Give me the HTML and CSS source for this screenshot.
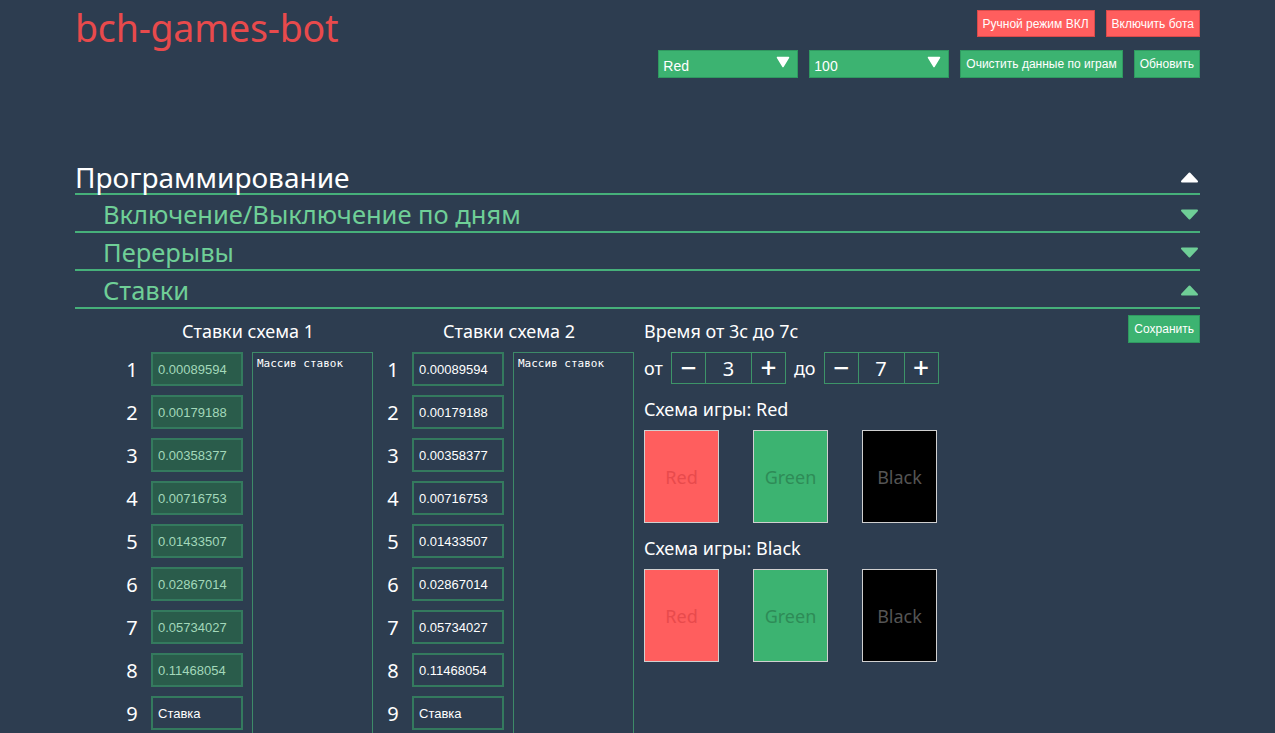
FILE: index.html
```html
<!DOCTYPE html>
<html lang="ru">
<head>
<meta charset="utf-8">
<title>bch-games-bot</title>
<link rel="stylesheet" href="styles.css">
</head>
<body>
<div class="container">
  <header class="header">
    <h1 class="logo">bch-games-bot</h1>
    <div class="controls">
      <div class="controls-row">
        <button class="btn btn-red">Ручной режим ВКЛ</button>
        <button class="btn btn-red">Включить бота</button>
      </div>
      <div class="controls-row">
        <div class="select-wrap">
          <select class="select"><option>Red</option></select>
          <svg class="select-arrow" width="14" height="12" viewBox="0 0 14 12"><path d="M1.5 1.5 H12.5 L7 10.5 Z" fill="#fff" stroke="#fff" stroke-width="1.5" stroke-linejoin="round"/></svg>
        </div>
        <div class="select-wrap">
          <select class="select"><option>100</option></select>
          <svg class="select-arrow" width="14" height="12" viewBox="0 0 14 12"><path d="M1.5 1.5 H12.5 L7 10.5 Z" fill="#fff" stroke="#fff" stroke-width="1.5" stroke-linejoin="round"/></svg>
        </div>
        <button class="btn btn-green">Очистить данные по играм</button>
        <button class="btn btn-green">Обновить</button>
      </div>
    </div>
  </header>

  <section class="section">
    <div class="sec-head main">
      <span>Программирование</span>
      <svg width="19" height="11" viewBox="0 0 19 11"><path d="M2 9.5 L9.5 1.5 L17 9.5 Z" fill="#fff" stroke="#fff" stroke-width="2" stroke-linejoin="round"/></svg>
    </div>
    <div class="sec-head sub">
      <span>Включение/Выключение по дням</span>
      <svg width="19" height="11" viewBox="0 0 19 11"><path d="M2 1.5 L17 1.5 L9.5 9.5 Z" fill="#6fcf97" stroke="#6fcf97" stroke-width="2" stroke-linejoin="round"/></svg>
    </div>
    <div class="sec-head sub">
      <span>Перерывы</span>
      <svg width="19" height="11" viewBox="0 0 19 11"><path d="M2 1.5 L17 1.5 L9.5 9.5 Z" fill="#6fcf97" stroke="#6fcf97" stroke-width="2" stroke-linejoin="round"/></svg>
    </div>
    <div class="sec-head sub">
      <span>Ставки</span>
      <svg width="19" height="11" viewBox="0 0 19 11"><path d="M2 9.5 L9.5 1.5 L17 9.5 Z" fill="#6fcf97" stroke="#6fcf97" stroke-width="2" stroke-linejoin="round"/></svg>
    </div>

    <div class="bets">
      <div class="scheme">
        <div class="scheme-title">Ставки схема 1</div>
        <div class="scheme-body">
          <div class="rows">
            <div class="row"><span class="num">1</span><input class="inp filled" value="0.00089594"></div>
            <div class="row"><span class="num">2</span><input class="inp filled" value="0.00179188"></div>
            <div class="row"><span class="num">3</span><input class="inp filled" value="0.00358377"></div>
            <div class="row"><span class="num">4</span><input class="inp filled" value="0.00716753"></div>
            <div class="row"><span class="num">5</span><input class="inp filled" value="0.01433507"></div>
            <div class="row"><span class="num">6</span><input class="inp filled" value="0.02867014"></div>
            <div class="row"><span class="num">7</span><input class="inp filled" value="0.05734027"></div>
            <div class="row"><span class="num">8</span><input class="inp filled" value="0.11468054"></div>
            <div class="row"><span class="num">9</span><input class="inp" placeholder="Ставка"></div>
          </div>
          <textarea class="area" placeholder="Массив ставок"></textarea>
        </div>
      </div>

      <div class="scheme">
        <div class="scheme-title">Ставки схема 2</div>
        <div class="scheme-body">
          <div class="rows">
            <div class="row"><span class="num">1</span><input class="inp" value="0.00089594"></div>
            <div class="row"><span class="num">2</span><input class="inp" value="0.00179188"></div>
            <div class="row"><span class="num">3</span><input class="inp" value="0.00358377"></div>
            <div class="row"><span class="num">4</span><input class="inp" value="0.00716753"></div>
            <div class="row"><span class="num">5</span><input class="inp" value="0.01433507"></div>
            <div class="row"><span class="num">6</span><input class="inp" value="0.02867014"></div>
            <div class="row"><span class="num">7</span><input class="inp" value="0.05734027"></div>
            <div class="row"><span class="num">8</span><input class="inp" value="0.11468054"></div>
            <div class="row"><span class="num">9</span><input class="inp" placeholder="Ставка"></div>
          </div>
          <textarea class="area" placeholder="Массив ставок"></textarea>
        </div>
      </div>

      <div class="settings">
        <div class="settings-head">
          <span class="label">Время от 3с до 7с</span>
          <button class="btn btn-green save">Сохранить</button>
        </div>
        <div class="time-row">
          <span class="label">от</span>
          <div class="stepper">
            <span class="step-btn">−</span><span class="step-val">3</span><span class="step-btn">+</span>
          </div>
          <span class="label">до</span>
          <div class="stepper">
            <span class="step-btn">−</span><span class="step-val">7</span><span class="step-btn">+</span>
          </div>
        </div>
        <div class="label game-label">Схема игры: Red</div>
        <div class="cards">
          <div class="card red">Red</div>
          <div class="card green">Green</div>
          <div class="card black">Black</div>
        </div>
        <div class="label game-label">Схема игры: Black</div>
        <div class="cards">
          <div class="card red">Red</div>
          <div class="card green">Green</div>
          <div class="card black">Black</div>
        </div>
      </div>
    </div>
  </section>
</div>
</body>
</html>
```

FILE: styles.css
```css
* { box-sizing: border-box; }
html, body {
  margin: 0;
  background: #2d3d50;
  color: #fff;
  font-family: "Noto Sans", "Open Sans", sans-serif;
  overflow: hidden;
}
.container {
  width: 1125px;
  margin: 0 auto;
}
.header {
  display: flex;
  justify-content: space-between;
  align-items: flex-start;
  padding-top: 10px;
}
.logo {
  margin: 0;
  font-weight: 400;
  font-size: 37.5px;
  line-height: 36px;
  color: #e84a4c;
  letter-spacing: -0.2px;
}
.controls {
  display: flex;
  flex-direction: column;
  align-items: flex-end;
  gap: 13px;
}
.controls-row {
  display: flex;
  gap: 11px;
}
.btn {
  font-family: "Liberation Sans", Arial, sans-serif;
  font-size: 12px;
  color: #fff;
  border: 1px solid transparent;
  padding: 0 5px;
  height: 27px;
  cursor: pointer;
}
.btn-red {
  background: #ff5e5e;
  border-color: #d94a4a;
  padding: 0 5px;
}
.btn-green {
  background: #3cb371;
  border-color: #2f9960;
  height: 28px;
}
.select-wrap {
  position: relative;
  width: 140px;
  height: 28px;
}
.select {
  appearance: none;
  -webkit-appearance: none;
  width: 100%;
  height: 100%;
  background: #3cb371;
  border: 1px solid #2f9960;
  color: #fff;
  font-family: "Liberation Sans", Arial, sans-serif;
  font-size: 14px;
  padding: 4px 0 0 4px;
  border-radius: 0;
}
.select-arrow {
  position: absolute;
  right: 8px;
  top: 6px;
  pointer-events: none;
}
.section {
  margin-top: 79px;
}
.sec-head {
  display: flex;
  justify-content: space-between;
  align-items: center;
  height: 38px;
  border-bottom: 2px solid #46b07a;
}
.sec-head.main {
  font-size: 28px;
  color: #fff;
  padding-top: 4px;
}
.sec-head.sub {
  font-size: 25.5px;
  color: #6fcf97;
  padding-left: 28px;
  padding-top: 2px;
}
.sec-head svg { margin-right: 1px; }
.bets {
  display: flex;
  padding-left: 46px;
  padding-top: 10px;
  gap: 9px;
}
.scheme {
  display: flex;
  flex-direction: column;
  width: 252px;
}
.scheme-title {
  text-align: center;
  font-size: 18px;
  line-height: 24px;
  height: 24px;
  margin-bottom: 9px;
  padding-left: 2px;
}
.scheme-body {
  display: flex;
  gap: 9px;
}
.rows {
  display: flex;
  flex-direction: column;
  gap: 9px;
}
.row {
  display: flex;
  align-items: center;
  gap: 8px;
}
.num {
  width: 22px;
  text-align: center;
  font-size: 20px;
}
.inp {
  width: 92px;
  height: 34px;
  background: transparent;
  border: 2px solid #347a5e;
  color: #fff;
  font-family: "Liberation Sans", Arial, sans-serif;
  font-size: 13px;
  padding: 0 5px;
  outline: none;
}
.inp.filled {
  background: #2a5c4b;
  color: #a3d8ba;
}
.inp::placeholder { color: #fff; opacity: 1; }
.area {
  width: 122px;
  height: 400px;
  background: transparent;
  border: 1px solid #3d8a68;
  color: #fff;
  font-family: "DejaVu Sans Mono", "Liberation Mono", monospace;
  font-size: 11px;
  padding: 4px 4px;
  resize: none;
}
.area::placeholder { color: #fff; opacity: 1; }
.settings {
  flex: 1;
  display: flex;
  flex-direction: column;
  padding-left: 1px;
}
.settings-head {
  display: flex;
  justify-content: space-between;
  align-items: center;
  height: 24px;
  margin-bottom: 9px;
}
.save { margin-top: -4px; }
.label {
  font-size: 18px;
  line-height: 24px;
}
.time-row {
  display: flex;
  align-items: center;
  gap: 8px;
  height: 32px;
}
.stepper {
  display: flex;
  border: 1px solid #3d9468;
  height: 32px;
}
.step-btn, .step-val {
  display: flex;
  align-items: center;
  justify-content: center;
  font-size: 20px;
}
.step-btn {
  width: 33px;
  font-size: 28px;
  font-weight: 500;
  line-height: 1;
  padding-bottom: 2px;
}
.step-val {
  width: 47px;
  border-left: 1px solid #3d9468;
  border-right: 1px solid #3d9468;
}
.game-label {
  margin-top: 13px;
  margin-bottom: 9px;
}
.cards {
  display: flex;
  gap: 34px;
}
.card {
  width: 75px;
  height: 93px;
  border: 1px solid #d0d0d0;
  display: flex;
  align-items: center;
  justify-content: center;
  font-size: 18px;
}
.card.red { background: #ff5e5e; color: #e84a4c; }
.card.green { background: #3cb371; color: #2e8b57; }
.card.black { background: #000; color: #555; }
```
